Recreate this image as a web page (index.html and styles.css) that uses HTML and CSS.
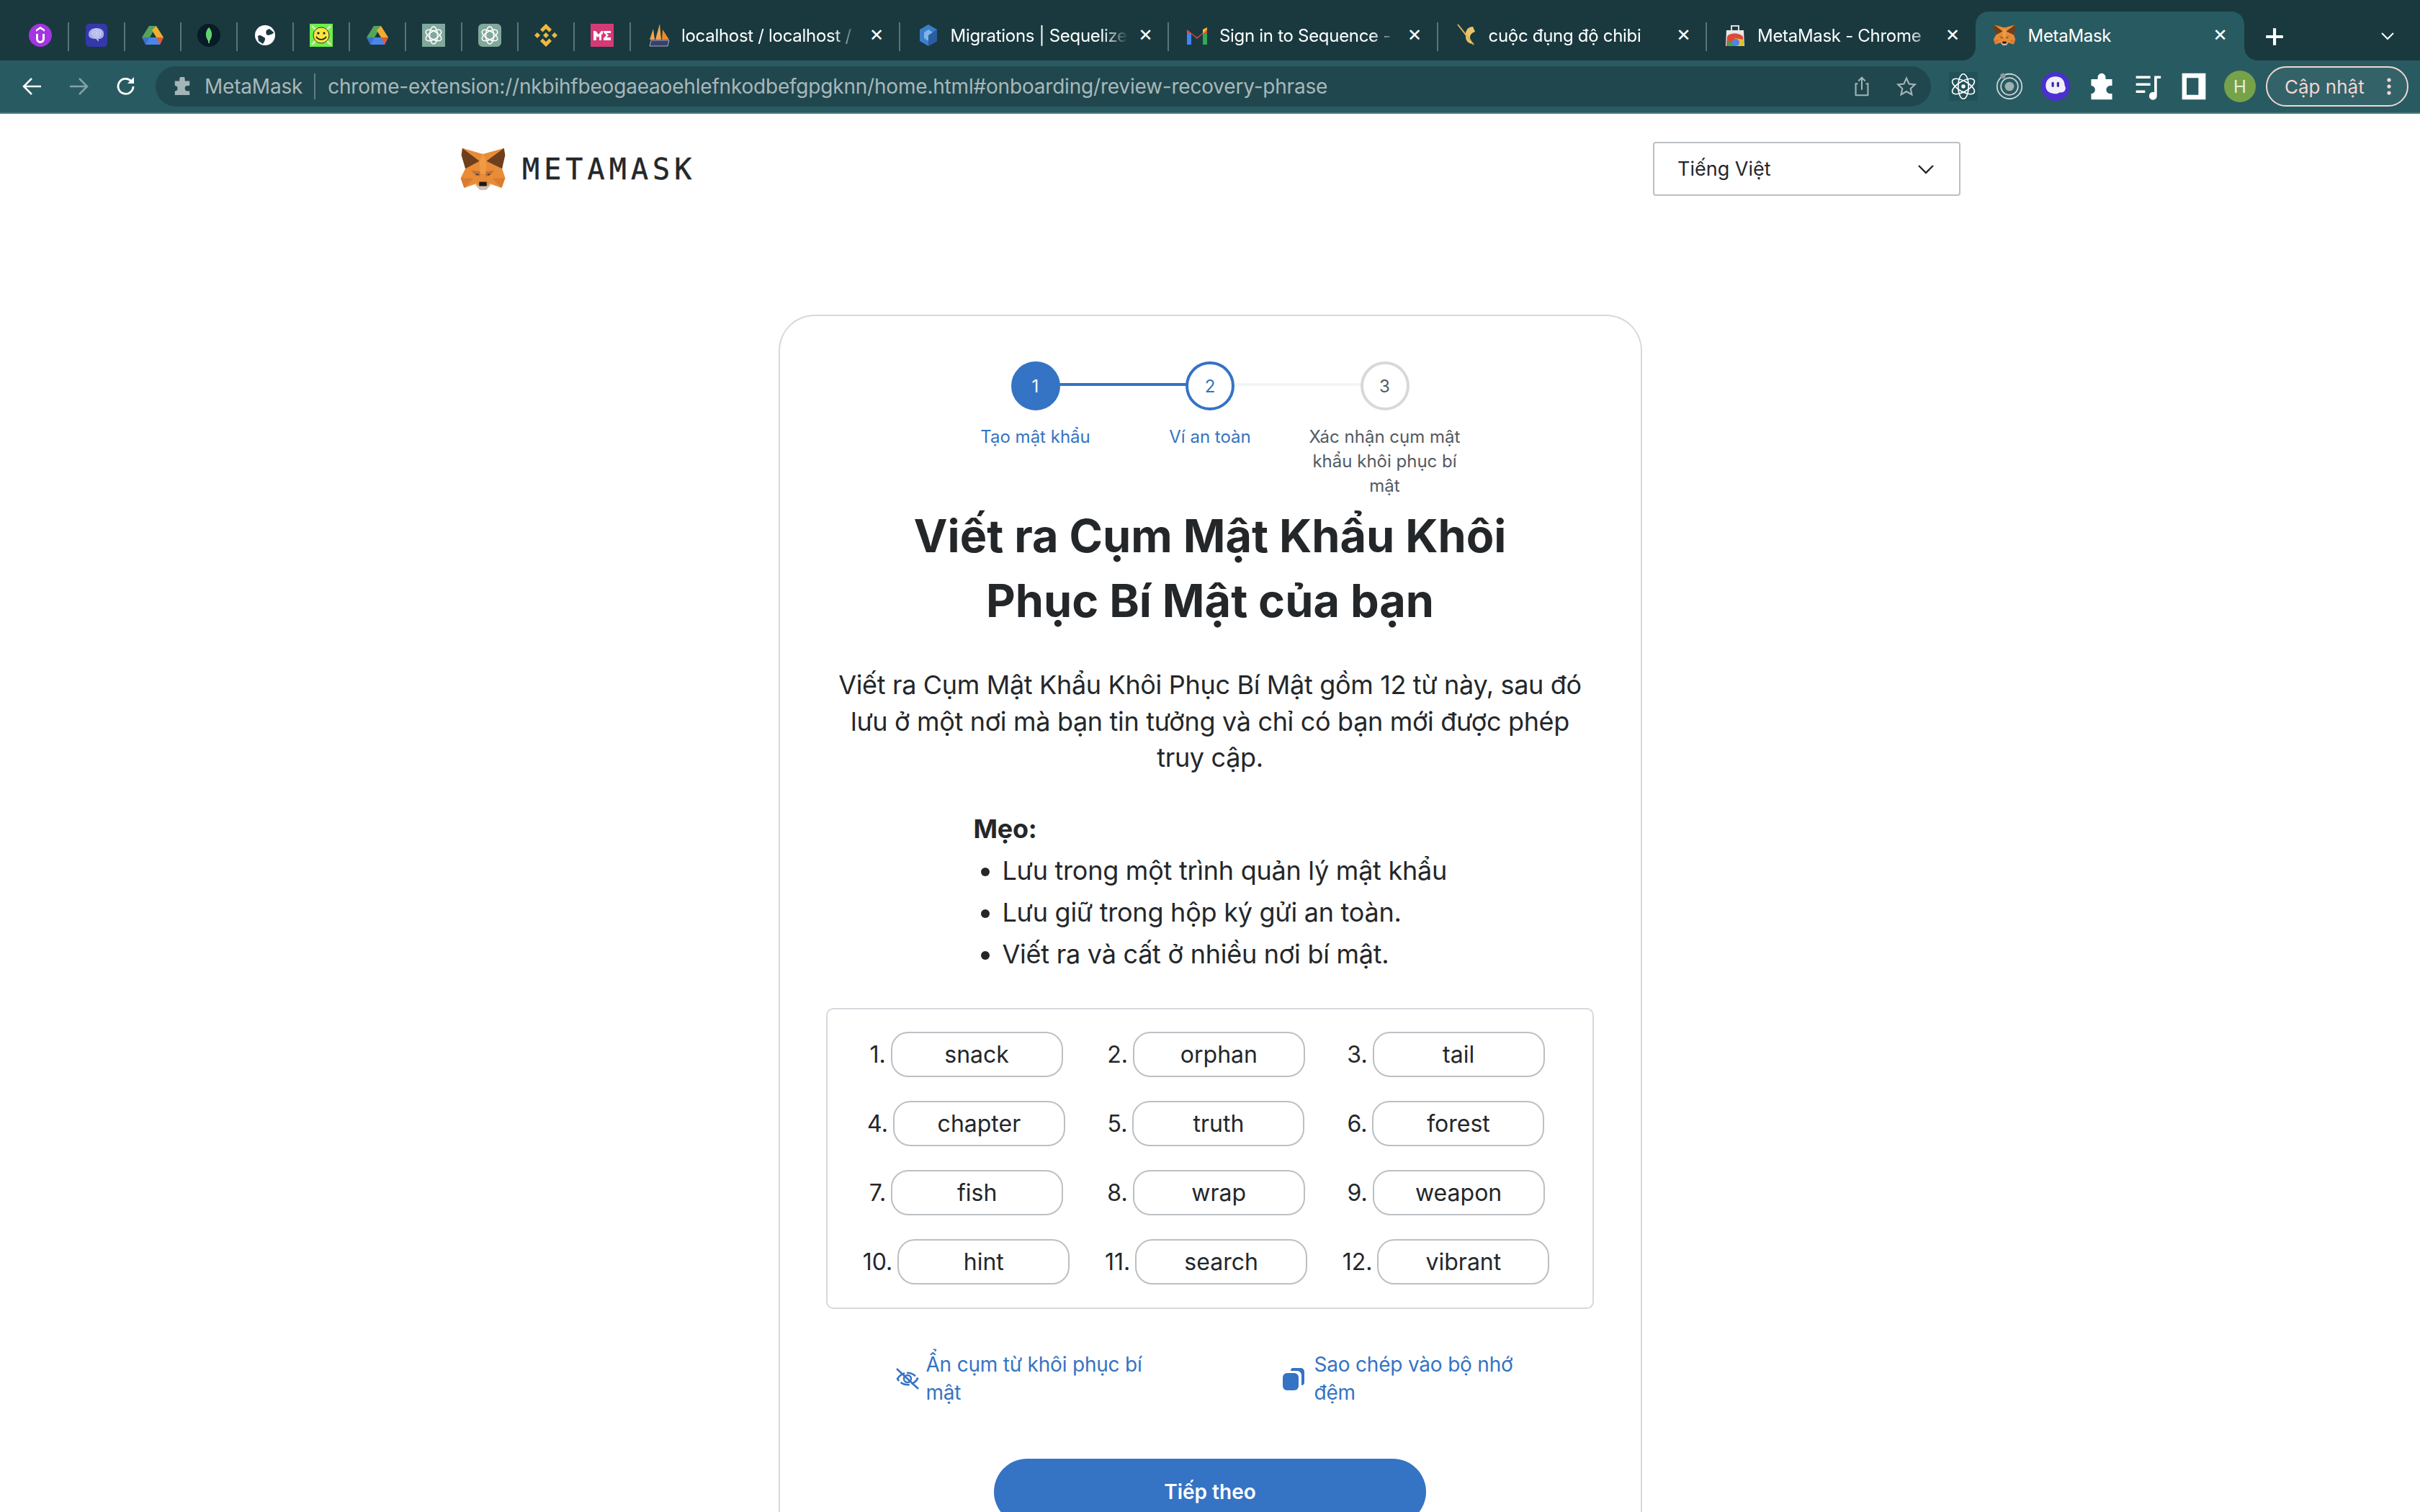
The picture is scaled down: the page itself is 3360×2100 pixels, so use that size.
FILE: index.html
```html
<!DOCTYPE html>
<html lang="vi">
<head>
<meta charset="utf-8">
<title>MetaMask</title>
<link rel="stylesheet" href="styles.css">
</head>
<body>
<div class="tabstrip">
  <div class="tab pinned"><svg class="fav" viewBox="0 0 32 32"><circle cx="16" cy="16" r="16" fill="#a435e0"/><path d="M10 14v7a6 6 0 0 0 12 0v-7h-3v7a3 3 0 0 1-6 0v-7z" fill="#fff"/><path d="M10 11l6-4 6 4v-3l-6-4-6 4z" fill="#fff"/></svg></div>
  <div class="tab pinned"><svg class="fav" viewBox="0 0 32 32"><rect width="30" height="32" x="1" rx="5" fill="#3438ab"/><path d="M5 15c0-6 5-9 11-9s11 3 10 9c0 4-3 6-7 6v4l-4-4c-6 0-10-2-10-6z" fill="#a6aee8"/><g fill="none" stroke="#dfe2f8" stroke-width="1"><circle cx="16" cy="13" r="6"/><circle cx="16" cy="13" r="3.5"/><circle cx="16" cy="13" r="1.2"/></g></svg></div>
  <div class="tab pinned"><svg class="fav" viewBox="0 0 32 32"><path d="M11 3h10L12 19H1z" fill="#55a45c"/><path d="M21 3l10 16H21L15 9z" fill="#f0ad32"/><path d="M6 29h20l5-10H11z" fill="#4a86e8"/><path d="M26 29l5-10H21z" fill="#dc5a3c"/><path d="M1 19l5 10 6-10z" fill="#3b72c9"/></svg></div>
  <div class="tab pinned"><svg class="fav" viewBox="0 0 32 32"><circle cx="16" cy="16" r="16" fill="#071c27"/><path d="M16 5c5 5 6 13 0 20-6-7-5-15 0-20z" fill="#5fd46e"/><rect x="15.3" y="22" width="1.4" height="5" fill="#a6e8ac"/></svg></div>
  <div class="tab pinned"><svg class="fav" viewBox="0 0 32 32"><circle cx="16" cy="16" r="14" fill="#fff"/><path d="M6 17c4-3 6 1 9 2 2 1 1 5-2 9l-6-4zM22 7l6 5c-1 3-5 3-8 4-3-1-3-4-2-7z" fill="#19393f"/><path d="M14 3c3 3 4 5 2 8-3 2-6 2-10 2 1-5 4-9 8-10z" fill="#fff"/></svg></div>
  <div class="tab pinned"><svg class="fav" viewBox="0 0 32 32"><rect width="32" height="32" fill="#6df04a"/><path d="M3 3l26 26M29 3L3 29" stroke="#e8dcc8" stroke-width="3"/><circle cx="16" cy="16" r="11" fill="#f5e63c" stroke="#333" stroke-width="1"/><circle cx="12" cy="13" r="1.6" fill="#111"/><circle cx="20" cy="13" r="1.6" fill="#111"/><path d="M9 18c3 5 11 5 14 0" fill="none" stroke="#111" stroke-width="1.6"/></svg></div>
  <div class="tab pinned"><svg class="fav" viewBox="0 0 32 32"><path d="M11 3h10L12 19H1z" fill="#55a45c"/><path d="M21 3l10 16H21L15 9z" fill="#f0ad32"/><path d="M6 29h20l5-10H11z" fill="#4a86e8"/><path d="M26 29l5-10H21z" fill="#dc5a3c"/><path d="M1 19l5 10 6-10z" fill="#3b72c9"/></svg></div>
  <div class="tab pinned"><svg class="fav" viewBox="0 0 32 32"><rect width="32" height="32" fill="#80a99b"/><g fill="none" stroke="#fff" stroke-width="1.5"><ellipse cx="16" cy="16" rx="5.500" ry="12"/><ellipse cx="16" cy="16" rx="5.500" ry="12" transform="rotate(60 16 16)"/><ellipse cx="16" cy="16" rx="5.500" ry="12" transform="rotate(120 16 16)"/></g></svg></div>
  <div class="tab pinned"><svg class="fav" viewBox="0 0 32 32"><rect width="32" height="32" rx="6" fill="#80a99b"/><g fill="none" stroke="#fff" stroke-width="1.5"><ellipse cx="16" cy="16" rx="5.500" ry="12"/><ellipse cx="16" cy="16" rx="5.500" ry="12" transform="rotate(60 16 16)"/><ellipse cx="16" cy="16" rx="5.500" ry="12" transform="rotate(120 16 16)"/></g></svg></div>
  <div class="tab pinned"><svg class="fav" viewBox="0 0 32 32"><g fill="#f0b93a"><path d="M16 0l8 8-3.500 3.500L16 7l-4.500 4.500L8 8z"/><path d="M16 32l-8-8 3.500-3.500L16 25l4.500-4.500L24 24z"/><path d="M16 12l4 4-4 4-4-4z"/><path d="M4 12l4 4-4 4-4-4z"/><path d="M28 12l4 4-4 4-4-4z"/></g></svg></div>
  <div class="tab pinned"><svg class="fav" viewBox="0 0 32 32"><rect width="32" height="32" fill="#d53a76"/><path d="M4 23V10h3l4 5 4-5h2v4l-2 1v8h-3v-6l-2 2-2-2v6zM18 10h10v3h-6l3 3-3 3h6v4H18v-3l4-4-4-4z" fill="#fff"/></svg></div>
  <div class="tab"><svg class="fav" viewBox="0 0 32 32"><path d="M3 22l5-15 2 15zM11 22l6-22 2 22z" fill="#f2a64a"/><path d="M20 22l1-14 9 14z" fill="#ee8a2c"/><path d="M3 31l2-8h25l-2 8z" fill="#3b3f6b" stroke="#c9cde0" stroke-width=".8"/></svg><span class="title">localhost / localhost /</span><span class="close">✕</span></div>
  <div class="tab"><svg class="fav" viewBox="0 0 32 32"><path d="M16 1l12 7v16l-12 7-12-7V8z" fill="#3a7fc9"/><path d="M16 8l6 4v8l-6 4-6-4v-8z" fill="#7fb3ea"/><path d="M16 31l12-7V8l-12 8z" fill="#2a5e9e"/></svg><span class="title">Migrations | Sequelize</span><span class="close">✕</span></div>
  <div class="tab"><svg class="fav" viewBox="0 0 32 32"><path d="M2 8l14 11L30 8v21h-6V14l-8 7-8-7v15H2z" fill="#e7493a"/><rect x="2" y="14" width="6" height="15" fill="#4285f4"/><rect x="24" y="14" width="6" height="15" fill="#34a853"/><path d="M24 14l6-6v-3l-6 3z" fill="#f7bb2a"/></svg><span class="title">Sign in to Sequence -</span><span class="close">✕</span></div>
  <div class="tab"><svg class="fav" viewBox="0 0 32 32"><path d="M25 4c-9 0-11 9-10 14 0 5 3 9 9 10l-3-8c0-5 2-7 7-9z" fill="#e8c46a"/><path d="M4 1l22 28" stroke="#d9b45a" stroke-width="2"/></svg><span class="title">cuộc đụng độ chibi</span><span class="close">✕</span></div>
  <div class="tab"><svg class="fav" viewBox="0 0 32 32"><path d="M4 9h24l1 22H3z" fill="#e9e9e9"/><path d="M11 9V3h10v6" fill="none" stroke="#ddd" stroke-width="2"/><path d="M4 31l1-13c2-6 18-6 22 0l1 13z" fill="#dd4b39"/><path d="M16 31V20l11 2 1 9z" fill="#e6c229"/><path d="M6 31l1-8 9 8z" fill="#3aa757"/><circle cx="17" cy="26" r="5" fill="#4a86e8"/></svg><span class="title">MetaMask - Chrome</span><span class="close">✕</span></div>
  <div class="tab active"><svg class="fav" viewBox="110 95 200 190"><use href="#fox"/></svg><span class="title">MetaMask</span><span class="close">✕</span></div>
  <div class="plus">+</div>
  <svg class="strip-chevron" viewBox="0 0 20 12"><path d="M2 2l8 8 8-8" fill="none" stroke="#fff" stroke-width="2"/></svg>
</div>

<div class="toolbar">
  <svg class="nav" viewBox="0 0 28 28"><path d="M26 14H3M13 3L2 14l11 11" fill="none" stroke="#fff" stroke-width="2.500"/></svg>
  <svg class="nav dim" viewBox="0 0 28 28"><path d="M2 14h23M15 3l11 11-11 11" fill="none" stroke="#82a3a6" stroke-width="2.500"/></svg>
  <svg class="nav" viewBox="0 0 28 28"><path d="M24 14a10.500 10.500 0 1 1-3-7.500" fill="none" stroke="#fff" stroke-width="2.800"/><path d="M25 1v9h-9z" fill="#fff"/></svg>
  <div class="omnibox">
    <svg class="ext" viewBox="0 0 28 28"><path d="M10 3a4 4 0 0 1 8 0v3h7v7h-3a4 4 0 0 0 0 8h3v6H3v-6a4 4 0 0 0 0-8V6h7z" fill="#a4b5b7"/></svg>
    <span class="site">MetaMask</span>
    <span class="url">chrome-extension://nkbihfbeogaeaoehlefnkodbefgpgknn/home.html#onboarding/review-recovery-phrase</span>
    <svg class="omni-icon" viewBox="0 0 28 32"><path d="M8 12H5v17h18V12h-3M14 21V3M9 8l5-5 5 5" fill="none" stroke="#a4b5b7" stroke-width="2.200"/></svg>
    <svg class="omni-icon" viewBox="0 0 32 32"><path d="M16 3l4 9 9.500 1-7 6.500 2 9.500-8.500-5-8.500 5 2-9.500-7-6.500L12 12z" fill="none" stroke="#a4b5b7" stroke-width="2.400"/></svg>
  </div>
  <div class="actions">
    <span class="action"><svg viewBox="0 0 44 44"><rect width="44" height="44" fill="#21525a"/><g fill="none" stroke="#fff" stroke-width="1.800"><ellipse cx="22" cy="22" rx="8" ry="19"/><ellipse cx="22" cy="22" rx="8" ry="19" transform="rotate(60 22 22)"/><ellipse cx="22" cy="22" rx="8" ry="19" transform="rotate(120 22 22)"/></g><circle cx="22" cy="22" r="3" fill="#fff"/></svg></span>
    <span class="action"><svg viewBox="0 0 44 44"><g fill="none" stroke="#c9d4d5" stroke-width="2"><circle cx="22" cy="22" r="19"/><circle cx="22" cy="22" r="13"/></g><circle cx="22" cy="22" r="7" fill="#9fb0b2"/><circle cx="12" cy="6" r="4" fill="#8a9a9c"/></svg></span>
    <span class="action"><svg viewBox="0 0 44 44"><circle cx="22" cy="22" r="22" fill="#4b2fd0"/><path d="M7 21C7 12 14 7 22 7s14 5 14 14c4 6-2 12-8 10-2 2-5 3-9 2-8-1-12-5-12-12z" fill="#f1eefc"/><rect x="16" y="15" width="3.500" height="8" rx="1.700" fill="#3a2aa5"/><rect x="24" y="15" width="3.500" height="8" rx="1.700" fill="#3a2aa5"/></svg></span>
    <span class="action"><svg viewBox="0 0 44 44"><path d="M16 8a6 6 0 0 1 12 0v3h10v10h-3a6 6 0 0 0 0 12h3v9H6V33a6 6 0 0 0 0-12V11h10z" fill="#fff"/></svg></span>
    <span class="action"><svg viewBox="0 0 44 44"><path d="M4 6h22v4H4zM4 17h22v4H4zM4 28h14v4H4zM32 6h10v4h-6v26a6 6 0 1 1-4-5z" fill="#fff"/></svg></span>
    <span class="action"><svg viewBox="0 0 44 44"><path d="M4 2h36v40H4zM11 9v26h18V9z" fill="#fff" fill-rule="evenodd"/></svg></span>
    <span class="action"><span class="avatar">H</span></span>
  </div>
  <div class="update"><span>Cập nhật</span><svg class="kebab" viewBox="0 0 8 32"><circle cx="4" cy="4" r="3.500" fill="#f2d6d0"/><circle cx="4" cy="16" r="3.500" fill="#f2d6d0"/><circle cx="4" cy="28" r="3.500" fill="#f2d6d0"/></svg></div>
</div>

<svg class="defs" width="0" height="0"><defs><g id="fox">
  <path d="M122 100L210 125 300 100 292 188 305 228 290 270 240 252 222 278H196L180 252 130 270 115 228 135 188z" fill="#e88c38"/>
  <path d="M122 100L195 155 135 188 118 130z" fill="#6e3f1d"/>
  <path d="M300 100L225 155 292 188 305 130z" fill="#6e3f1d"/>
  <path d="M195 155L210 122 225 155 222 210H198z" fill="#f09a45"/>
  <path d="M160 195L198 200 198 222 175 212z" fill="#c9702f"/>
  <path d="M258 195L222 200 222 222 245 212z" fill="#c9702f"/>
  <path d="M178 208L194 212 184 218z" fill="#33465a"/>
  <path d="M242 208L226 212 236 218z" fill="#33465a"/>
  <path d="M115 228L170 230 130 270z" fill="#d97c30"/>
  <path d="M305 228L250 230 290 270z" fill="#d97c30"/>
  <path d="M172 252L195 262H225L248 252 225 278H196z" fill="#cdbfb3"/>
  <path d="M194 244H226V262H194z" fill="#1c1a18"/>
</g></defs></svg>

<main class="page">
  <header class="page-head">
    <div class="brand"><svg class="fox" viewBox="110 95 200 190"><use href="#fox"/></svg><span class="wordmark">METAMASK</span></div>
    <div class="lang"><span>Tiếng Việt</span><svg class="lang-chev" viewBox="0 0 24 14"><path d="M2 2l10 10L22 2" fill="none" stroke="#24272a" stroke-width="2.400"/></svg></div>
  </header>

  <section class="card">
    <ol class="stepper">
      <li class="step done"><span class="dot">1</span><span class="step-label">Tạo mật khẩu</span></li>
      <li class="step current"><span class="dot">2</span><span class="step-label">Ví an toàn</span></li>
      <li class="step"><span class="dot">3</span><span class="step-label">Xác nhận cụm mật khẩu khôi phục bí mật</span></li>
    </ol>
    <h1 class="heading">Viết ra Cụm Mật Khẩu Khôi<br>Phục Bí Mật của bạn</h1>
    <p class="lead">Viết ra Cụm Mật Khẩu Khôi Phục Bí Mật gồm 12 từ này, sau đó lưu ở một nơi mà bạn tin tưởng và chỉ có bạn mới được phép truy cập.</p>
    <div class="tips">
      <strong class="tips-title">Mẹo:</strong>
      <ul class="tips-list">
        <li>Lưu trong một trình quản lý mật khẩu</li>
        <li>Lưu giữ trong hộp ký gửi an toàn.</li>
        <li>Viết ra và cất ở nhiều nơi bí mật.</li>
      </ul>
    </div>
    <div class="phrase">
      <div class="word"><span>1.</span><b>snack</b></div>
      <div class="word"><span>2.</span><b>orphan</b></div>
      <div class="word"><span>3.</span><b>tail</b></div>
      <div class="word"><span>4.</span><b>chapter</b></div>
      <div class="word"><span>5.</span><b>truth</b></div>
      <div class="word"><span>6.</span><b>forest</b></div>
      <div class="word"><span>7.</span><b>fish</b></div>
      <div class="word"><span>8.</span><b>wrap</b></div>
      <div class="word"><span>9.</span><b>weapon</b></div>
      <div class="word"><span>10.</span><b>hint</b></div>
      <div class="word"><span>11.</span><b>search</b></div>
      <div class="word"><span>12.</span><b>vibrant</b></div>
    </div>
    <div class="links">
      <div class="link"><svg class="link-icon" viewBox="0 0 34 30"><path d="M3 15c7-11 21-11 28 0-7 11-21 11-28 0z" fill="none" stroke="#3573c4" stroke-width="2.600" stroke-dasharray="13 3"/><circle cx="17" cy="15" r="5" fill="none" stroke="#3573c4" stroke-width="2.400"/><path d="M2 1l30 28" stroke="#3573c4" stroke-width="2.600"/></svg><span>Ẩn cụm từ khôi phục bí mật</span></div>
      <div class="link copy"><svg class="copy-icon" viewBox="0 0 32 34"><path d="M14 2h12a5 5 0 0 1 5 5v15a4 4 0 0 1-4 4V12a6 6 0 0 0-6-6h-9a4 4 0 0 1 2-4z" fill="#3573c4"/><rect x="1" y="9" width="22" height="24" rx="6" fill="#3573c4"/></svg><span>Sao chép vào bộ nhớ đệm</span></div>
    </div>
    <div class="actions-row"><button class="primary">Tiếp theo</button></div>
  </section>
</main>
</body>
</html>
```
FILE: styles.css
```css
* { box-sizing: border-box; }
html, body { margin: 0; height: 2100px; overflow: hidden; background: #fff; }
body { font-family: "Inter", "Noto Sans", sans-serif; color: #24272a; }
.defs { display: block; height: 0; }

/* browser chrome */
.tabstrip { display: flex; align-items: flex-end; height: 84px; padding-left: 17px; background: #19393f; color: #fff; }
.tab { position: relative; display: flex; align-items: center; flex: 0 0 373.500px; height: 68px; padding: 0 0 0 24px; font-size: 24px; letter-spacing: -.3px; white-space: nowrap; }
.tab::after { content: ""; position: absolute; right: -1px; top: 15px; width: 2px; height: 40px; background: #56757a; }
.tab.pinned { flex-basis: 78px; padding: 0; justify-content: center; }
.tab:nth-child(16)::after { display: none; }
.fav { width: 32px; height: 32px; flex: none; margin-top: -2px; }
.title { width: 247px; margin-left: 15px; overflow: hidden; margin-top: -2px; -webkit-mask-image: linear-gradient(90deg, #000 85%, transparent); mask-image: linear-gradient(90deg, #000 85%, transparent); }
.close { margin-left: 14px; font-size: 24px; line-height: 1; margin-top: -2px; font-family: "DejaVu Sans", sans-serif; }
.tab.active { background: #285a61; border-radius: 18px 18px 0 0; }
.tab.active .title { margin-left: 17px; width: 243px; -webkit-mask-image: none; mask-image: none; }
.tab.active::before, .tab.active::after { content: ""; position: absolute; bottom: 0; top: auto; width: 18px; height: 18px; }
.tab.active::before { left: -18px; background: radial-gradient(circle at 0 0, transparent 17.500px, #285a61 18px); }
.tab.active::after { right: -18px; background: radial-gradient(circle at 100% 0, transparent 17.500px, #285a61 18px); }
.plus { flex: none; width: 60px; height: 68px; margin-left: 12px; font-size: 50px; line-height: 62px; text-align: center; font-weight: 400; }
.strip-chevron { width: 20px; height: 12px; margin: 0 0 28px 117px; }

.toolbar { display: flex; align-items: center; height: 74px; background: #285a61; border-bottom: 2px solid #47777b; }
.nav { width: 28px; height: 28px; flex: none; margin-left: 31px; }
.nav.dim { margin-left: 36px; }
.nav:nth-child(3) { margin-left: 38px; }
.omnibox { display: flex; align-items: center; width: 2465px; height: 56px; margin-left: 27px; padding: 0 20px 0 24px; background: #21474e; border-radius: 28px; color: #a8b8ba; font-size: 28px; letter-spacing: -.2px; white-space: nowrap; }
.ext { width: 26px; height: 26px; flex: none; }
.site { margin-left: 18px; padding-right: 16px; border-right: 2px solid #5f7c80; line-height: 36px; }
.url { flex: 1; margin-left: 17px; }
.omni-icon { width: 28px; height: 30px; flex: none; margin-left: 34px; }
.actions { display: flex; margin-left: 13px; }
.action { display: flex; align-items: center; justify-content: center; width: 64px; height: 56px; }
.action svg { width: 40px; height: 40px; }
.avatar { display: flex; align-items: center; justify-content: center; width: 44px; height: 44px; border-radius: 50%; background: #76a24a; color: #e8f0dc; font-size: 24px; }
.update { display: flex; align-items: center; justify-content: space-between; width: 198px; height: 56px; margin-left: 4px; padding: 0 22px 0 24px; border: 2px solid #f2d6d0; border-radius: 28px; background: #336269; color: #f2d6d0; font-size: 26px; white-space: nowrap; }
.kebab { width: 6px; height: 24px; }

/* page */
.page { width: 2084px; margin: 0 auto; }
.page-head { display: flex; align-items: center; justify-content: space-between; padding-top: 39px; }
.brand { display: flex; align-items: center; }
.fox { width: 65px; height: 62px; }
.wordmark { margin-left: 22px; font-family: "DejaVu Sans Mono", monospace; font-size: 40px; letter-spacing: 6.100px; color: #24272a; -webkit-text-stroke: .5px #24272a; }
.lang { display: flex; align-items: center; justify-content: space-between; width: 427px; height: 75px; padding: 0 34px 0 32px; border: 2px solid #bbc0c5; border-radius: 4px; font-size: 27px; }
.lang-chev { width: 24px; height: 14px; }

.card { width: 1199px; margin: 165px auto 0; padding-top: 63px; border: 2px solid #d6d9dc; border-bottom: 0; border-radius: 50px 50px 0 0; }
.stepper { display: flex; justify-content: center; list-style: none; margin: 0; padding: 0; }
.step { position: relative; display: flex; flex-direction: column; align-items: center; width: 242.500px; padding: 0 16px; text-align: center; font-size: 24px; line-height: 34px; color: #535a61; }
.step:not(:last-child)::after { content: ""; position: absolute; left: 50%; width: 100%; top: 30px; height: 4px; background: #f2f4f6; }
.step.done::after { background: #3573c4; }
.dot { position: relative; z-index: 1; display: flex; align-items: center; justify-content: center; width: 68px; height: 68px; margin-bottom: 20px; padding-top: 2px; border: 4px solid #d6d9dc; border-radius: 50%; background: #fff; color: #535a61; }
.done .dot { background: #3573c4; border-color: #3573c4; color: #fff; }
.current .dot { border-color: #3573c4; color: #3573c4; }
.done, .current { color: #3573c4; }
.heading { margin: 7px 0 0; font-size: 63px; line-height: 90px; font-weight: 700; text-align: center; }
.lead { width: 1060px; margin: 47px auto 0; font-size: 36px; line-height: 50.500px; text-align: center; letter-spacing: -.33px; }
.tips { margin: 44px 0 0 269px; font-size: 36px; line-height: 58px; letter-spacing: -.25px; }
.tips-title { display: block; font-weight: 700; }
.tips-list { margin: 0; padding: 0 0 0 40px; }

.phrase { display: grid; grid-template-columns: repeat(3, 333px); row-gap: 33px; width: 1066px; margin: 46px auto 0; padding: 31px 40px 32px 26px; border: 2px solid #d6d9dc; border-radius: 10px; }
.word { display: flex; align-items: center; justify-content: center; font-size: 32px; }
.word span { margin-right: 7px; }
.word b { display: flex; align-items: center; justify-content: center; width: 239px; height: 63px; border: 2px solid #bbc0c5; border-radius: 24px; font-weight: 400; }

.links { display: flex; margin: 58px 0 0 160px; color: #3573c4; font-size: 28px; line-height: 39px; letter-spacing: -.2px; }
.link { display: flex; align-items: center; width: 537px; }
.link span { width: 350px; }
.link.copy { width: 400px; }
.link.copy span { width: 300px; }
.link-icon { width: 34px; height: 30px; flex: none; margin-right: 9px; }
.copy-icon { width: 32px; height: 34px; flex: none; margin-right: 13px; }
.actions-row { display: flex; justify-content: center; margin-top: 72px; }
.primary { width: 600px; height: 92px; border: 0; border-radius: 46px; background: #3573c4; color: #fff; font: 600 28px "Inter", sans-serif; }
```
